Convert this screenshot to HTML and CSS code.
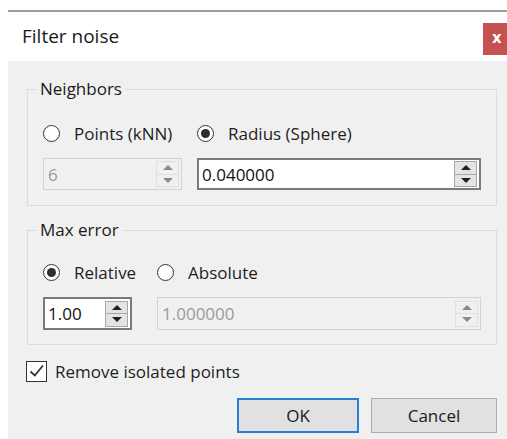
FILE: index.html
```html
<!DOCTYPE html>
<html lang="en">
<head>
<meta charset="utf-8">
<title>Filter noise</title>
<link rel="stylesheet" href="styles.css">
</head>
<body>
<div class="window">
  <div class="titlebar">
    <span class="title">Filter noise</span>
    <span class="close">x</span>
  </div>
  <div class="content">
    <fieldset class="group group-neighbors">
      <legend>Neighbors</legend>
      <label class="radio"><span class="radio-mark"></span>Points (kNN)</label>
      <label class="radio"><span class="radio-mark checked"></span>Radius (Sphere)</label>
      <div class="spin disabled">
        <span class="spin-value">6</span>
        <span class="spin-buttons"><span class="up"></span><span class="down"></span></span>
      </div>
      <div class="spin active">
        <span class="spin-value">0.040000</span>
        <span class="spin-buttons"><span class="up"></span><span class="down"></span></span>
      </div>
    </fieldset>

    <fieldset class="group group-error">
      <legend>Max error</legend>
      <label class="radio"><span class="radio-mark checked"></span>Relative</label>
      <label class="radio"><span class="radio-mark"></span>Absolute</label>
      <div class="spin active">
        <span class="spin-value">1.00</span>
        <span class="spin-buttons"><span class="up"></span><span class="down"></span></span>
      </div>
      <div class="spin disabled">
        <span class="spin-value">1.000000</span>
        <span class="spin-buttons"><span class="up"></span><span class="down"></span></span>
      </div>
    </fieldset>

    <label class="check">
      <span class="check-mark">
        <svg width="18" height="18" viewBox="0 0 18 18"><path d="M2.5 9.5 L6.8 13.5 L15 3.5" fill="none" stroke="#333" stroke-width="1.8"/></svg>
      </span>
      Remove isolated points
    </label>

    <div class="buttons">
      <span class="btn btn-default">OK</span>
      <span class="btn btn-cancel">Cancel</span>
    </div>
  </div>
</div>
</body>
</html>
```

FILE: styles.css
```css
html, body {
  margin: 0;
  padding: 0;
  background: #ffffff;
  overflow: hidden;
}

body {
  font-family: "Open Sans", "Noto Sans", sans-serif;
  font-size: 17px;
  color: #1e1e1e;
}

.window {
  margin: 10px 0 0 8px;
  border-top: 2px solid #9c9c9c;
  height: 440px;
  display: flex;
  flex-direction: column;
}

/* title bar */
.titlebar {
  height: 49px;
  flex: none;
  background: #ffffff;
  display: flex;
  align-items: flex-start;
  justify-content: space-between;
}

.title {
  font-size: 19px;
  line-height: 24px;
  margin: 12px 0 0 14px;
  color: #1a1a1a;
}

.close {
  margin-top: 11px;
  width: 24px;
  height: 32px;
  background: #c75050;
  color: #ffffff;
  font-weight: bold;
  font-family: "DejaVu Sans", sans-serif;
  font-size: 15px;
  line-height: 30px;
  padding-left: 9px;
  box-sizing: border-box;
}

/* dialog body */
.content {
  flex: 1;
  background: #f0f0f0;
  padding: 0 10px 0 18px;
  display: flex;
  flex-direction: column;
}

.group {
  margin: 17px 0 0 1px;
  border: 1px solid #dcdcdc;
  padding: 22px 15px 15px 15px;
  display: grid;
  row-gap: 14px;
  min-width: 0;
}

.group legend {
  padding: 0 3px;
  margin-left: -6px;
  line-height: 22px;
  color: #1a1a1a;
}

.group-neighbors {
  grid-template-columns: 139px 1fr;
  column-gap: 15px;
}

.group-error {
  margin-top: 13px;
  grid-template-columns: 89px 1fr;
  column-gap: 25px;
  padding-top: 20px;
  padding-bottom: 14px;
}

/* radio buttons */
.radio {
  display: flex;
  align-items: center;
  gap: 14px;
  height: 22px;
  white-space: nowrap;
}

.radio-mark {
  width: 17px;
  height: 17px;
  box-sizing: border-box;
  border: 1.5px solid #333333;
  border-radius: 50%;
  background: #ffffff;
  display: flex;
  align-items: center;
  justify-content: center;
  flex: none;
}

.radio-mark.checked::after {
  content: "";
  width: 9px;
  height: 9px;
  border-radius: 50%;
  background: #2e2e2e;
}

/* spin boxes */
.spin {
  height: 32px;
  box-sizing: border-box;
  display: flex;
  align-items: center;
  justify-content: space-between;
  padding: 0 2px 0 3px;
}

.group-error .spin {
  height: 33px;
}

.spin.active {
  background: #ffffff;
  border: 2px solid #7a7a7a;
  color: #111111;
}

.spin.disabled {
  background: #f0f0f0;
  border: 1px solid #d3d3d3;
  color: #9a9a9a;
  padding-left: 4px;
}

.spin-buttons {
  width: 23px;
  height: 26px;
  display: flex;
  flex-direction: column;
  box-sizing: border-box;
}

.spin-buttons span {
  flex: 1;
  display: flex;
  align-items: center;
  justify-content: center;
}

.active .spin-buttons {
  border: 1px solid #a8a8a8;
  background: #e4e4e4;
}

.active .spin-buttons .up {
  border-bottom: 1px solid #a8a8a8;
}

.disabled .spin-buttons {
  border: 1px solid #e0e0e0;
}

.disabled .spin-buttons .up {
  border-bottom: 1px solid #e0e0e0;
}

.spin-buttons .up::after,
.spin-buttons .down::after {
  content: "";
  border-left: 5px solid transparent;
  border-right: 5px solid transparent;
}

.spin-buttons .up::after {
  border-bottom: 5px solid #222222;
}

.spin-buttons .down::after {
  border-top: 5px solid #222222;
}

.disabled .spin-buttons .up::after {
  border-bottom-color: #8a8a8a;
}

.disabled .spin-buttons .down::after {
  border-top-color: #8a8a8a;
}

/* checkbox */
.check {
  margin-top: 15px;
  display: flex;
  align-items: center;
  gap: 8px;
  height: 22px;
}

.check-mark {
  width: 21px;
  height: 21px;
  box-sizing: border-box;
  border: 1.5px solid #333333;
  background: #ffffff;
  display: flex;
  align-items: center;
  justify-content: center;
}

/* dialog buttons */
.buttons {
  margin-top: 16px;
  display: flex;
  justify-content: flex-end;
  gap: 12px;
}

.btn {
  height: 35px;
  box-sizing: border-box;
  background: #e1e1e1;
  display: flex;
  align-items: center;
  justify-content: center;
  color: #1a1a1a;
}

.btn-default {
  width: 122px;
  border: 2px solid #2a7fd4;
}

.btn-cancel {
  width: 126px;
  border: 1px solid #adadad;
}
```
